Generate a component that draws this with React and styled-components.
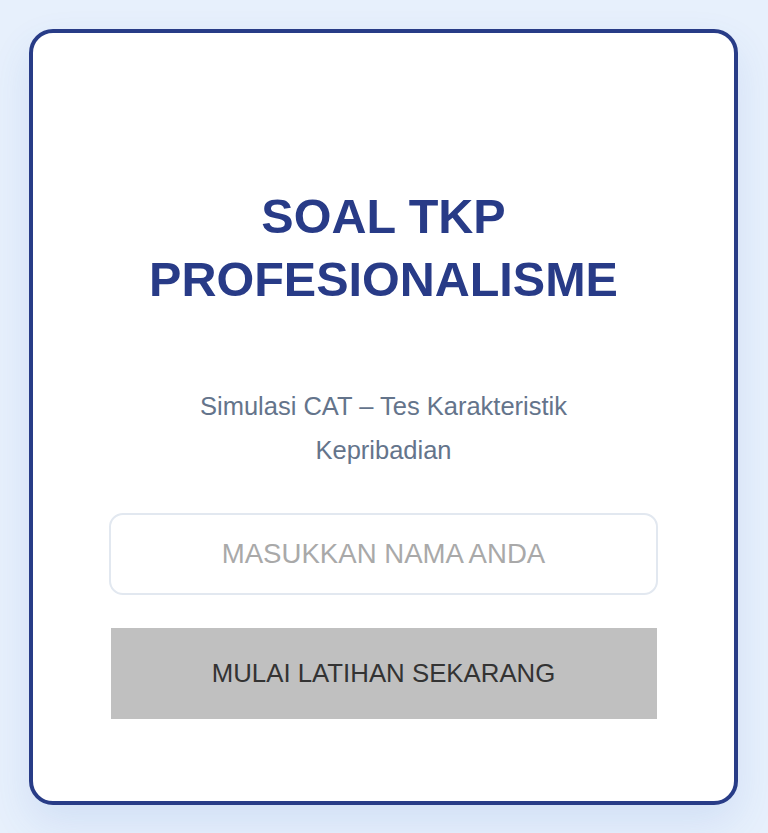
import styled, { createGlobalStyle } from "styled-components";

const GlobalStyle = createGlobalStyle`
    * {
        box-sizing: border-box;
    }
    body {
        margin: 0;
        background: #e7f0fc;
        font-family: "Liberation Sans", Arial, sans-serif;
    }
`;

const Page = styled.div`
    min-height: 100vh;
    display: flex;
    align-items: center;
    justify-content: center;
    padding: 0 30px 0 29px;
`;

const Card = styled.div`
    width: 100%;
    background: #ffffff;
    border: 4px solid #283c87;
    border-radius: 24px;
    box-shadow: 0 18px 40px rgba(60, 110, 200, 0.12);
    padding: 152px 77px 82px;
    display: flex;
    flex-direction: column;
    align-items: center;
    text-align: center;
`;

const Title = styled.h1`
    margin: 0;
    font-size: 48.5px;
    line-height: 63px;
    font-weight: 700;
    color: #283b87;
    max-width: 520px;
`;

const Subtitle = styled.p`
    margin: 73px 0 0;
    max-width: 420px;
    font-size: 25.5px;
    line-height: 44px;
    color: #64748b;
`;

const NameInput = styled.input`
    margin-top: 41px;
    width: 549px;
    height: 82px;
    border: 2px solid #e2e8f0;
    border-radius: 14px;
    background: #fff;
    font-family: inherit;
    font-size: 27.6px;
    text-align: center;
    text-transform: uppercase;
    color: #333;
    outline: none;

    &::placeholder {
        color: #a9a9a9;
    }
`;

const StartButton = styled.button`
    margin-top: 33px;
    width: 546px;
    height: 91px;
    border: none;
    border-radius: 0;
    background: #c0c0c0;
    color: #333333;
    font-family: inherit;
    font-size: 25.8px;
    cursor: not-allowed;
`;

const App = () => {
    return (
        <>
            <GlobalStyle />
            <Page>
                <Card>
                    <Title>SOAL TKP PROFESIONALISME</Title>
                    <Subtitle>Simulasi CAT – Tes Karakteristik Kepribadian</Subtitle>
                    <NameInput placeholder="MASUKKAN NAMA ANDA" />
                    <StartButton disabled>MULAI LATIHAN SEKARANG</StartButton>
                </Card>
            </Page>
        </>
    );
};

export default App;
